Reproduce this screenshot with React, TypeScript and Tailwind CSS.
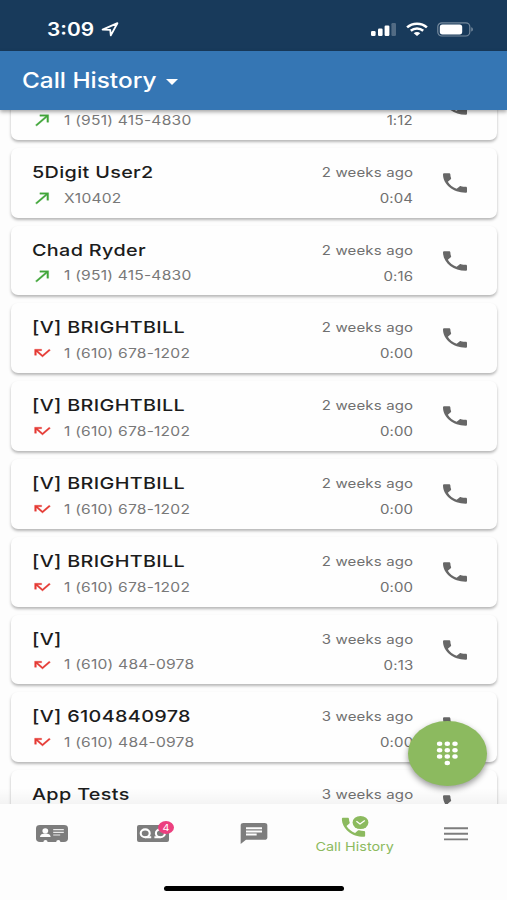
import type { ReactNode } from 'react'
import clsx from 'clsx'

type Call = {
  name?: string
  number?: string
  when?: string
  duration?: string
  missed?: boolean
}

const calls: Call[] = [
  { number: '1 (951) 415-4830', duration: '1:12' },
  { name: '5Digit User2', number: 'X10402', when: '2 weeks ago', duration: '0:04' },
  { name: 'Chad Ryder', number: '1 (951) 415-4830', when: '2 weeks ago', duration: '0:16' },
  { name: '[V] BRIGHTBILL', number: '1 (610) 678-1202', when: '2 weeks ago', duration: '0:00', missed: true },
  { name: '[V] BRIGHTBILL', number: '1 (610) 678-1202', when: '2 weeks ago', duration: '0:00', missed: true },
  { name: '[V] BRIGHTBILL', number: '1 (610) 678-1202', when: '2 weeks ago', duration: '0:00', missed: true },
  { name: '[V] BRIGHTBILL', number: '1 (610) 678-1202', when: '2 weeks ago', duration: '0:00', missed: true },
  { name: '[V]', number: '1 (610) 484-0978', when: '3 weeks ago', duration: '0:13', missed: true },
  { name: '[V] 6104840978', number: '1 (610) 484-0978', when: '3 weeks ago', duration: '0:00', missed: true },
  { name: 'App Tests', when: '3 weeks ago' },
]

const PHONE_PATH =
  'M20 15.5c-1.25 0-2.45-.2-3.57-.57-.35-.11-.74-.03-1.02.24l-2.2 2.2c-2.83-1.44-5.15-3.75-6.59-6.59l2.2-2.21c.28-.26.36-.65.25-1C8.7 6.45 8.5 5.25 8.5 4c0-.55-.45-1-1-1H4c-.55 0-1 .45-1 1 0 9.39 7.61 17 17 17 .55 0 1-.45 1-1v-3.5c0-.55-.45-1-1-1z'

export default function App() {
  return (
    <div className="flex h-[900px] w-[507px] flex-col overflow-hidden bg-[#fdfdfd] font-['Inter',sans-serif]">
      <StatusBar />
      <Header />
      <main className="relative min-h-0 flex-1 overflow-hidden pr-[10px] pl-[11px]">
        <div className="-mt-[40px] flex flex-col gap-2">
          {calls.map((call, i) => (
            <CallCard key={i} call={call} />
          ))}
        </div>
        <div className="absolute inset-x-0 bottom-0 h-4 bg-linear-to-t from-black/4 to-transparent" />
        <DialpadButton />
      </main>
      <BottomNav />
    </div>
  )
}

function StatusBar() {
  return (
    <div className="flex h-[51px] shrink-0 items-center bg-[#183a5b] pt-[7px] pl-[47px] text-white">
      <span className="mt-px w-[54px] origin-left scale-x-[1.16] text-[18px] leading-none font-semibold">3:09</span>
      <svg width="18" height="15" viewBox="0 0 18 15" fill="none" stroke="currentColor" strokeWidth="1.8" strokeLinejoin="round">
        <path d="M1.6 7.6 16.4 1.2 9.8 13.4 9.2 7.8Z" />
      </svg>
      <div className="ml-[251px] flex items-center">
        <svg width="27" height="15" viewBox="0 0 27 15" fill="currentColor">
          <rect x="1" y="9" width="4.6" height="5" rx="1.2" />
          <rect x="8" y="6.5" width="4.6" height="7.5" rx="1.2" />
          <rect x="14.6" y="3.5" width="4.8" height="10.5" rx="1.2" />
          <rect x="21.4" y="1" width="4.6" height="13" rx="1.2" opacity=".25" />
        </svg>
        <svg className="ml-[9px]" width="22" height="15" viewBox="0 0 22 15" fill="none" stroke="currentColor" strokeWidth="2.5">
          <path d="M1.1 5.4C6.5.4 15.5.4 20.9 5.4" />
          <path d="M4.8 8.8C8.2 5.8 13.8 5.8 17.2 8.8" />
          <path d="M11 14 7.7 11.2C9.6 9.7 12.4 9.7 14.3 11.2Z" fill="currentColor" stroke="none" />
        </svg>
        <svg className="ml-[9px]" width="37" height="15" viewBox="0 0 37 15">
          <rect x=".8" y=".8" width="32" height="13.2" rx="4" fill="none" stroke="#fff" strokeWidth="1.2" opacity=".4" />
          <rect x="2.8" y="2.4" width="22.4" height="10" rx="2.6" fill="#fff" />
          <path d="M34.3 5.2c2 .6 2 3.8 0 4.4z" fill="#fff" opacity=".45" />
        </svg>
      </div>
    </div>
  )
}

function Header() {
  return (
    <header className="relative z-10 flex h-[59px] shrink-0 items-center bg-[#3576b4] pl-[22px] text-white shadow-[0_2px_4px_rgba(0,0,0,0.35)]">
      <h1 className="w-[144px] origin-left scale-x-[1.16] text-[21px] font-medium whitespace-nowrap">Call History</h1>
      <svg width="12" height="6" viewBox="0 0 12 6" fill="currentColor" className="mt-[3px]">
        <path d="M0 0h12L6 6z" />
      </svg>
    </header>
  )
}

function CallCard({ call }: { call: Call }) {
  return (
    <div className="flex h-[69.8px] shrink-0 rounded-[7px] bg-[#fefefe] pt-[11px] pr-[26px] pl-[21px] shadow-[0_2px_3px_rgba(0,0,0,0.28)]">
      <div className="flex-1">
        <div className="h-[26px] w-fit origin-left scale-x-[1.2] text-[16.5px] leading-[26px] font-medium tracking-[0.28px] whitespace-nowrap text-[#1c1c1c]">
          {call.name}
        </div>
        {call.number && (
          <div className="flex h-[26px] items-center">
            {call.missed ? <MissedIcon /> : <OutgoingIcon />}
            <span className="mt-px ml-[10.5px] origin-left scale-x-[1.2] text-[13px] tracking-[0.18px] whitespace-nowrap text-[#787878]">
              {call.number}
            </span>
          </div>
        )}
      </div>
      <div className="text-right text-[12.5px] leading-[27px] tracking-[0.12px] whitespace-nowrap text-[#707070]">
        <div className="h-[26px] origin-right scale-x-[1.2]">{call.when}</div>
        <div className="h-[26px] origin-right scale-x-[1.2]">{call.duration}</div>
      </div>
      <svg className="mt-[11px] ml-[26px] shrink-0" width="32" height="26" viewBox="0 0 24 24" preserveAspectRatio="none" fill="#676767">
        <path d={PHONE_PATH} />
      </svg>
    </div>
  )
}

function OutgoingIcon() {
  return (
    <svg width="21" height="18" viewBox="0 0 24 24" preserveAspectRatio="none" fill="#41a63a" stroke="#41a63a" strokeWidth=".4">
      <path d="M9 5v2h6.59L4 18.59 5.41 20 17 8.41V15h2V5z" />
    </svg>
  )
}

function MissedIcon() {
  return (
    <svg width="21" height="18" viewBox="0 0 24 24" preserveAspectRatio="none" fill="#e53a34" stroke="#e53a34" strokeWidth=".4">
      <path d="M19.59 7L12 14.59 6.41 9H11V7H3v8h2v-4.59l7 7 9-9z" />
    </svg>
  )
}

function DialpadButton() {
  const dots = [
    [31.6, 22.8], [39.3, 22.8], [47, 22.8],
    [31.6, 29.2], [39.3, 29.2], [47, 29.2],
    [31.6, 35.5], [39.3, 35.5], [47, 35.5],
    [39.3, 42],
  ]
  return (
    <button className="absolute right-[20.5px] bottom-[18.5px] h-[65px] w-[78.5px] rounded-[50%] bg-[#8cba5f] shadow-[0_3px_6px_rgba(0,0,0,0.4)]">
      <svg width="78.5" height="65" viewBox="0 0 78.5 65" fill="#fff">
        {dots.map(([cx, cy]) => (
          <ellipse key={`${cx}-${cy}`} cx={cx} cy={cy} rx="2.7" ry="2.2" />
        ))}
      </svg>
    </button>
  )
}

function BottomNav() {
  return (
    <nav className="flex h-[96px] shrink-0 flex-col items-center justify-between bg-[#fdfdfd] pb-[9px]">
      <div className="grid h-[59px] w-full grid-cols-5 text-[#7d7d7d]">
        <NavItem>
          <svg width="32" height="17" viewBox="0 0 32 17" className="ml-[2px]">
            <path
              d="M4 0h24q4 0 4 3.4v10.2q0 3.4-4 3.4h-3.6a2.1 1.9 0 0 0-4.2 0h-8.6a2.1 1.9 0 0 0-4.2 0H4q-4 0-4-3.4V3.4Q0 0 4 0z"
              fill="currentColor"
            />
            <ellipse cx="9.3" cy="5.8" rx="2.9" ry="2.6" fill="#fff" />
            <path d="M4 12c0-2.6 2.4-3.6 5.3-3.6s5.3 1 5.3 3.6z" fill="#fff" />
            <path d="M17.2 4.6h10.6M17.2 7.3h10.6M17.2 10h7" stroke="#fff" strokeWidth="1.2" opacity=".85" />
          </svg>
        </NavItem>
        <NavItem>
          <div className="relative ml-[2px]">
            <svg width="32" height="17" viewBox="0 0 32 17">
              <rect width="32" height="17" rx="2" fill="currentColor" />
              <g fill="none" stroke="#fff" strokeWidth="2.1">
                <ellipse cx="8.2" cy="8.3" rx="4.5" ry="3.9" />
                <ellipse cx="23.4" cy="8.3" rx="4.5" ry="3.9" />
                <path d="M8.2 12.2h6M17.4 12.2h6" />
              </g>
            </svg>
            <span className="absolute -top-[4px] -right-[5px] flex h-[13px] w-[16px] items-center justify-center rounded-[50%] bg-[#ec407f] text-[9px] leading-none text-white">
              <span className="scale-x-[1.2]">4</span>
            </span>
          </div>
        </NavItem>
        <NavItem>
          <svg width="32" height="25" viewBox="0 0 24 24" preserveAspectRatio="none" fill="currentColor" className="ml-[1px]">
            <path d="M20 2H4c-1.1 0-1.99.9-1.99 2L2 22l4-4h14c1.1 0 2-.9 2-2V4c0-1.1-.9-2-2-2zM6 9h12v2H6V9zm8 5H6v-2h8v2zm4-6H6V6h12v2z" />
          </svg>
        </NavItem>
        <NavItem active>
          <svg width="28" height="23" viewBox="0 0 28 23" className="mt-[11px] shrink-0">
            <svg x="-3" y="-.5" width="31" height="25.5" viewBox="0 0 24 24" preserveAspectRatio="none">
              <path d={PHONE_PATH} fill="currentColor" />
            </svg>
            <ellipse cx="19.5" cy="7.5" rx="9" ry="7.5" fill="#fdfdfd" />
            <ellipse cx="19.5" cy="7.5" rx="7.9" ry="6.6" fill="currentColor" />
            <path d="M15.4 6.2l3.6 2.8 4.8-3.6" fill="none" stroke="#fff" strokeWidth="1.3" />
          </svg>
          <span className="mt-[1px] scale-x-[1.2] text-[12px] leading-[16px] whitespace-nowrap">Call History</span>
        </NavItem>
        <NavItem>
          <svg width="24" height="14" viewBox="0 0 24 14" stroke="currentColor" strokeWidth="1.9">
            <path d="M0 1.2h24M0 6.8h24M0 12.4h24" />
          </svg>
        </NavItem>
      </div>
      <div className="h-[5px] w-[180px] rounded-full bg-black" />
    </nav>
  )
}

function NavItem({ active, children }: { active?: boolean; children: ReactNode }) {
  return (
    <div className={clsx('flex flex-col items-center', active ? 'justify-start text-[#8cba5f]' : 'justify-center')}>
      {children}
    </div>
  )
}
